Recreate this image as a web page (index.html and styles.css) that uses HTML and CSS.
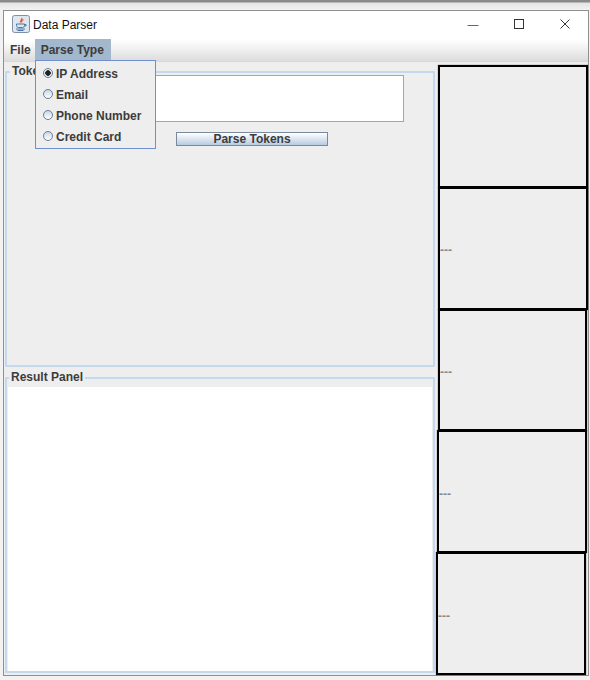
FILE: index.html
```html
<!DOCTYPE html>
<html lang="en">
<head>
    <meta charset="UTF-8">
    <meta name="viewport" content="width=device-width, initial-scale=1.0">
    <title>Data Parser</title>
    <link rel="stylesheet" href="styles.css">
</head>
<body>
    <div class="window">
        <!-- Title bar -->
        <div class="title-bar">
            <svg class="app-icon" width="18" height="18" viewBox="0 0 18 18">
                <rect x="0.5" y="0.5" width="17" height="17" rx="2" fill="#dfe6f0" stroke="#7f8fa6"/>
                <path d="M9.5 3c1.5 1.5-2 2.500-1 4.500M11.500 4.500c-2 1-2.500 2-1.500 3" fill="none" stroke="#d9622b" stroke-width="1.200"/>
                <path d="M4.500 9h8v1.500c0 1.200-1 2-2 2h-4c-1 0-2-.8-2-2zM12.500 9.500h1.500v1.500h-1.500" fill="none" stroke="#4a76a8"/>
                <path d="M4 14h9M5.500 15.500h6" stroke="#4a76a8"/>
            </svg>
            <span class="app-title">Data Parser</span>
            <div class="window-buttons">
                <svg width="12" height="12" viewBox="0 0 12 12"><path d="M0.500 7.500h11" stroke="#666"/></svg>
                <svg width="12" height="12" viewBox="0 0 12 12"><rect x="1.500" y="1.500" width="9" height="9" fill="none" stroke="#333"/></svg>
                <svg width="12" height="12" viewBox="0 0 12 12"><path d="M1.500 1.500l9 9M10.500 1.500l-9 9" stroke="#333"/></svg>
            </div>
        </div>

        <!-- Menu bar -->
        <div class="menu-bar">
            <span class="menu-item file-item">File</span>
            <span class="menu-item active">Parse Type</span>
        </div>

        <div class="menu-popup">
            <div class="menu-option"><span class="radio checked"></span>IP Address</div>
            <div class="menu-option"><span class="radio"></span>Email</div>
            <div class="menu-option"><span class="radio"></span>Phone Number</div>
            <div class="menu-option"><span class="radio"></span>Credit Card</div>
        </div>

        <div class="content">
            <div class="left-column">
                <fieldset class="panel token-panel">
                    <legend>Token Panel</legend>
                    <div class="token-input"></div>
                    <button class="parse-button">Parse Tokens</button>
                </fieldset>
                <fieldset class="panel result-panel">
                    <legend>Result Panel</legend>
                    <div class="result-area"></div>
                </fieldset>
            </div>

            <div class="right-column">
                <div class="box"></div>
                <div class="box"><span class="dash">---</span></div>
                <div class="box box-third"><span class="dash">---</span></div>
                <div class="box box-fourth"><span class="dash">---</span></div>
                <div class="box box-fifth"><span class="dash">---</span></div>
            </div>
        </div>
    </div>
</body>
</html>
```

FILE: styles.css
```css
body {
    margin: 0;
    width: 590px;
    height: 680px;
    overflow: hidden;
    box-sizing: border-box;
    padding: 10px 1px 4px 3px;
    font-family: "Liberation Sans", Arial, sans-serif;
    background: linear-gradient(#8a8a8a 0, #8a8a8a 2px, #e4e4e4 3px, #f2f2f2 10px);
}

.window {
    position: relative;
    height: 100%;
    box-sizing: border-box;
    border: 1px solid #8f8f8f;
    background-color: #eeeeee;
    display: flex;
    flex-direction: column;
}

/* Title bar */
.title-bar {
    height: 28px;
    flex: none;
    display: flex;
    align-items: center;
    padding-left: 8px;
    background-color: #fff;
}

.app-icon {
    margin-right: 3px;
    margin-top: -2px;
}

.app-title {
    font-size: 12px;
    color: #111;
    margin-top: -1px;
}

.window-buttons {
    margin-left: auto;
    display: flex;
    gap: 34px;
    padding-right: 17px;
    margin-top: -2px;
}

/* Menu bar */
.menu-bar {
    height: 23px;
    flex: none;
    box-sizing: border-box;
    display: flex;
    align-items: flex-start;
    background: linear-gradient(#ffffff, #f6f6f6 30%, #dcdcdc);
    border-bottom: 1px solid #d8d8d8;
}

.menu-item {
    height: 21px;
    padding: 0 6px;
    font-size: 12px;
    font-weight: bold;
    color: #3c3c3c;
    line-height: 22px;
}

.file-item {
    padding-right: 4px;
}

.menu-item.active {
    padding-right: 7px;
    background-color: #a3b8cc;
}

.menu-popup {
    position: absolute;
    left: 31px;
    top: 49px;
    width: 121px;
    height: 89px;
    padding-top: 2px;
    box-sizing: border-box;
    background-color: #eeeeee;
    border: 1px solid #6f8fd0;
    z-index: 10;
}

.menu-option {
    height: 21px;
    display: flex;
    align-items: center;
    font-size: 12px;
    font-weight: bold;
    color: #3c3c3c;
}

.radio {
    width: 8px;
    height: 8px;
    margin: -2px 3px 0 7px;
    flex: none;
    border-radius: 50%;
    border: 1px solid #6a7f96;
    background: linear-gradient(#c8d6e6, #ffffff);
    box-sizing: content-box;
}

.radio.checked {
    background: radial-gradient(circle, #222 0, #222 2.500px, #e8eef5 3px);
}

/* Main area */
.content {
    flex: 1;
    min-height: 0;
    display: flex;
}

.left-column {
    width: 430px;
    margin-left: 1px;
    padding: 3px 0 2px;
    box-sizing: border-box;
    display: flex;
    flex-direction: column;
    flex: none;
    gap: 4px;
}

.panel {
    margin: 0;
    padding: 0;
    min-width: 0;
    border: 2px solid #c5d9ee;
}

.panel legend {
    margin-left: 3px;
    padding: 0 2px;
    font-size: 12px;
    font-weight: bold;
    color: #3c3c3c;
    line-height: 13px;
}

.token-panel {
    height: 302px;
    flex: none;
    box-sizing: border-box;
    display: flex;
    flex-direction: column;
    align-items: flex-end;
}

.token-input {
    width: 368px;
    height: 47px;
    box-sizing: border-box;
    margin: -3px 29px 0 0;
    background-color: #fff;
    border: 1px solid #9aa8b8;
}

.parse-button {
    width: 152px;
    height: 14px;
    margin: 10px 105px 0 0;
    padding: 0;
    font-family: inherit;
    font-size: 12px;
    font-weight: bold;
    line-height: 12px;
    color: #3c3c3c;
    background: linear-gradient(#ffffff, #d4e0ee 60%, #b8cbe0);
    border: 1px solid #7a8a9e;
}

.result-panel {
    flex: 1;
    min-height: 0;
    box-sizing: border-box;
    display: flex;
    padding: 3px 1px 0 1px;
}

.result-panel legend {
    margin-left: 1px;
}

.result-area {
    flex: 1;
    background-color: #fff;
}

/* Right boxes */
.right-column {
    flex: 1;
    display: flex;
    flex-direction: column;
    padding: 3px 0 0 3px;
}

.box {
    flex: 1;
    border: 2px solid #000;
    box-shadow: 0 0 1px rgba(0, 0, 0, 0.7);
    background-color: #eeeeee;
    display: flex;
    align-items: center;
    font-size: 12px;
    font-weight: bold;
    color: #888;
}

.box + .box {
    margin-top: -1px;
}

.dash {
    margin-top: 4px;
}

.box-third {
    margin-right: 1px;
}

.box-fourth {
    margin: -1px 1px 0 -1px;
}

.box-fifth {
    margin: -1px 2px 0 -2px;
}
```
